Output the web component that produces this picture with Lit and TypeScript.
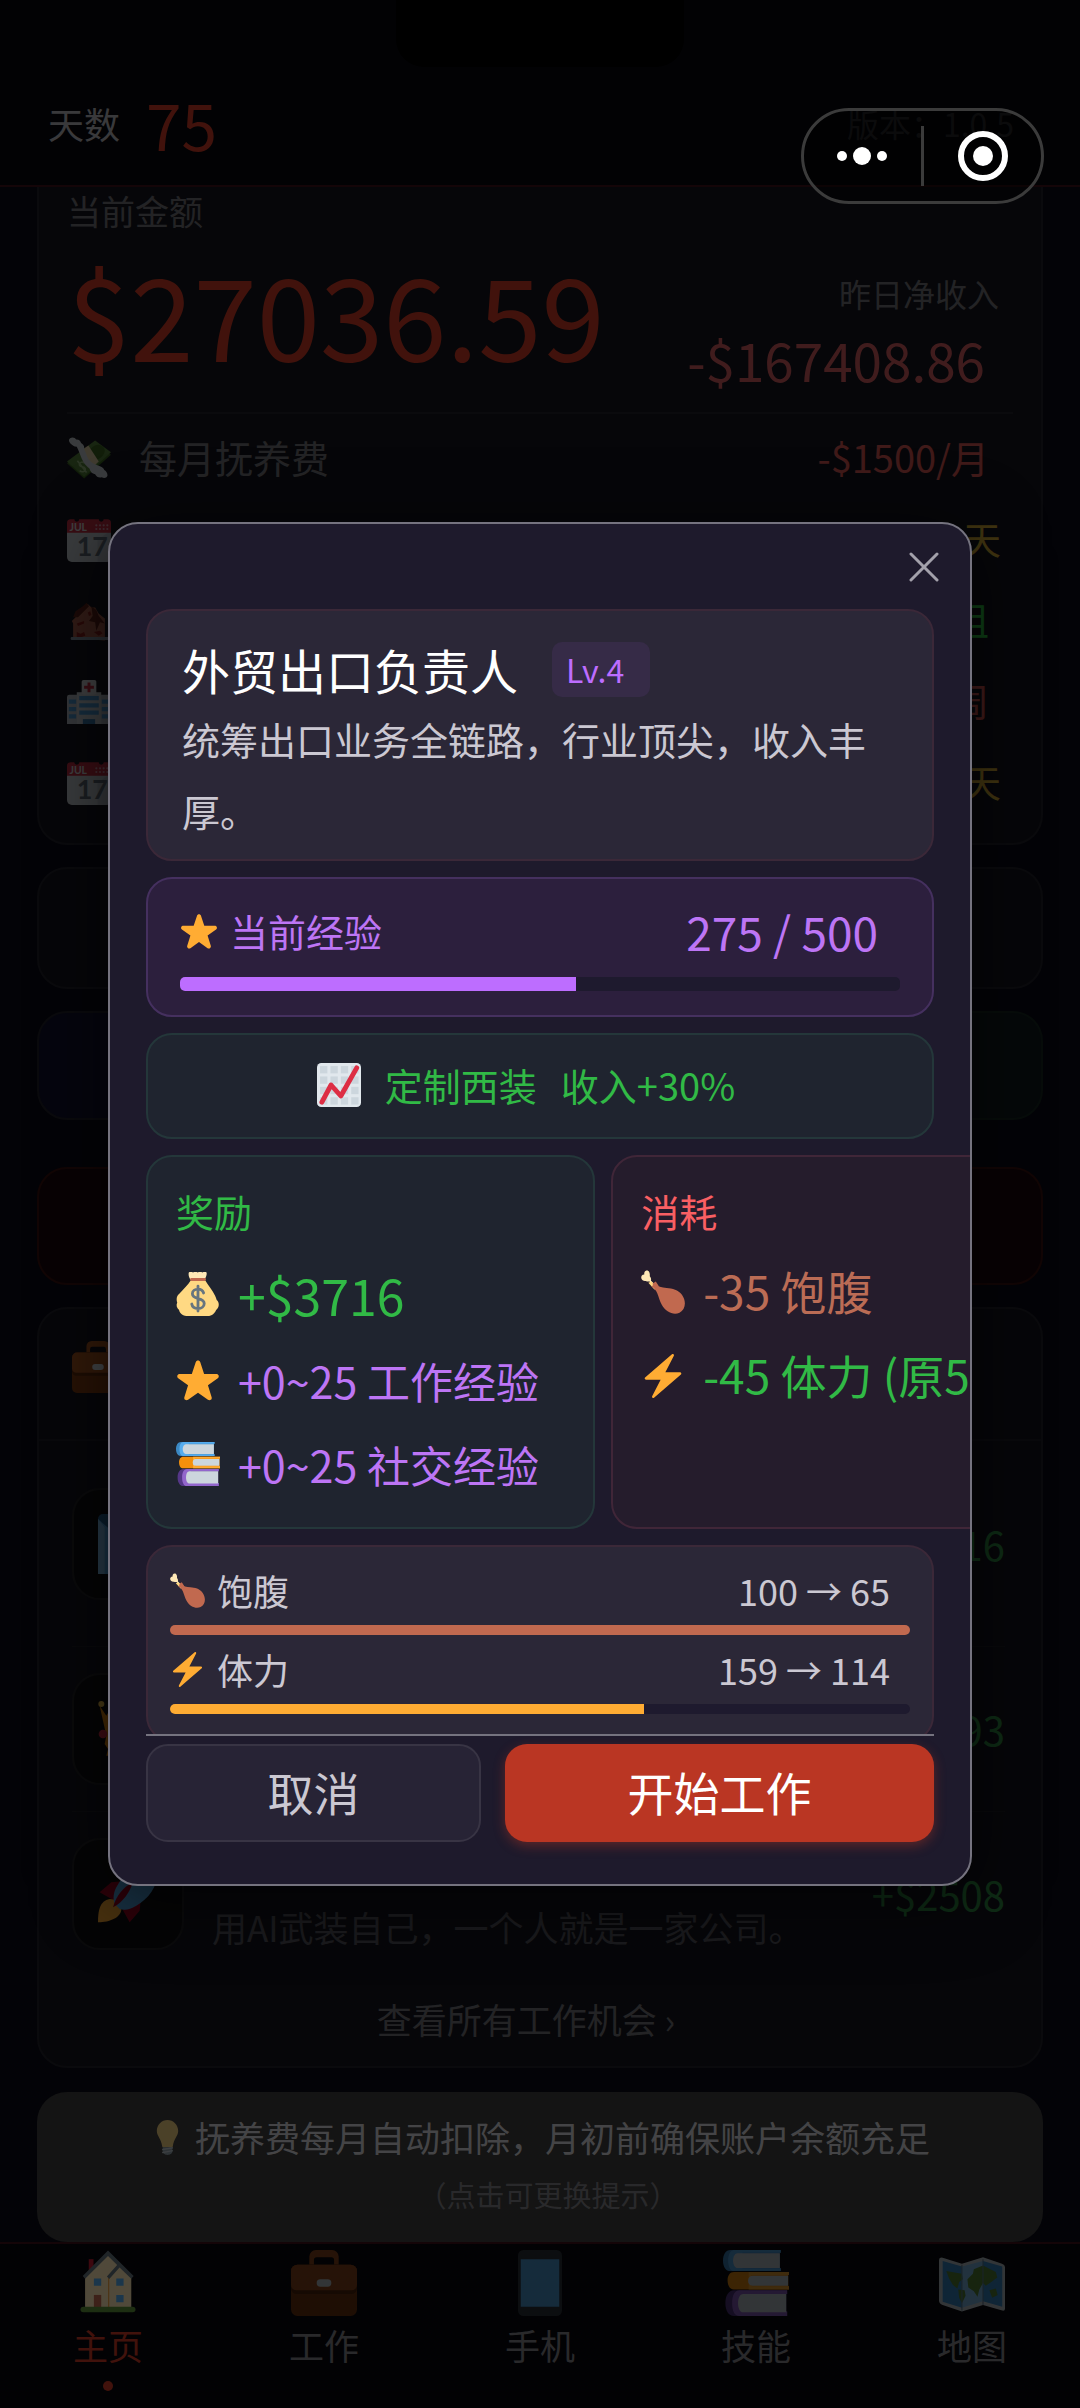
import { LitElement, html, svg, css, nothing, type SVGTemplateResult } from "lit";
import { customElement, property, state } from "lit/decorators.js";
import { classMap } from "lit/directives/class-map.js";
import { styleMap } from "lit/directives/style-map.js";

const BRIEFCASE = svg`
  <path d="M10 8V3.600A3.600 3.600 0 0 1 13.600 0h8.800A3.600 3.600 0 0 1 26 3.600V8h-2.500V5.500a1.500 1.500 0 0 0-1.500-1.500h-8a1.500 1.500 0 0 0-1.500 1.500V8z" fill="#9A4E1C"/>
  <rect x="0" y="8" width="36" height="28" rx="3.500" fill="#7B3A10"/>
  <path d="M0 11.500A3.500 3.500 0 0 1 3.500 8h29a3.500 3.500 0 0 1 3.500 3.500V21a3 3 0 0 1-3 3H3a3 3 0 0 1-3-3z" fill="#5A270A"/>
  <path d="M0 11.500A3.500 3.500 0 0 1 3.500 8h29a3.500 3.500 0 0 1 3.500 3.500V19a3 3 0 0 1-3 3H3a3 3 0 0 1-3-3z" fill="#9A4E1C"/>
  <rect x="14" y="16" width="8" height="4" rx="2" fill="#CCD6DD"/>`;

const CALENDAR = svg`
  <path d="M0 10h36v22a4 4 0 0 1-4 4H4a4 4 0 0 1-4-4z" fill="#E1E8ED"/>
  <path d="M36 10v22a4 4 0 0 1-4 4h-7V18z" fill="#CCD6DD"/>
  <path d="M0 12V4a3 3 0 0 1 3-3h3a2 2 0 0 0 4 0h16a2 2 0 0 0 4 0h3a3 3 0 0 1 3 3v8z" fill="#DD2E44"/>
  <text x="2" y="10.500" font-size="8.500" font-weight="700" fill="#F5F8FA" font-family="Lato, sans-serif">JUL</text>
  <g fill="#F4ABBA">
    <circle cx="24" cy="6" r=".9"/><circle cx="27" cy="6" r=".9"/><circle cx="30" cy="6" r=".9"/><circle cx="33" cy="6" r=".9"/>
    <circle cx="24" cy="9" r=".9"/><circle cx="27" cy="9" r=".9"/><circle cx="30" cy="9" r=".9"/><circle cx="33" cy="9" r=".9"/>
  </g>
  <text x="8" y="31" font-size="22" font-weight="700" fill="#66757F" font-family="Lato, sans-serif">17</text>`;

const DRUMSTICK = svg`
  <path d="M13 13.500 8.200 8.700c.2-1.300-.1-2.600-1-3.500C7.500 3.300 6.900 .5 4.900 .5 3.100 .5 2.400 2.200 2.700 3.700 .9 3.700 0 5.200.2 6.500.5 8.500 2.600 9.300 4 8.900c.9.500 1.900.6 2.700.3l5.200 5.600z" fill="#FFE8B6"/>
  <path d="M8.500 9.500 14 15l-3 1-5-5.500z" fill="#FFD983"/>
  <path d="M11.500 11c2.200 2.600 5.300 3.400 9.500 3.700 4.700.4 9.500 1.300 12.500 5.600 3.900 5.600 2.900 12.200-2 14.700-4.900 2.400-11.300-.7-14.500-6.500-1.700-3.200-2.300-6-3.700-9.500-.9-2.200-2.500-4.200-4.800-5.500z" fill="#C1694F"/>
  <path d="m9.300 11.300 2.800-1.900 2.400 3.600-3 2z" fill="#C1694F"/>`;

const ICONS: Record<string, SVGTemplateResult> = {
  star: svg`<path fill="#FFAC33" d="M27.287 34.627c-.404 0-.806-.124-1.152-.371L18 28.422l-8.135 5.834c-.343.247-.745.371-1.147.371-.405 0-.81-.126-1.153-.379-.689-.5-.979-1.390-.723-2.199l3.034-9.792-8.062-5.681c-.685-.505-.97-1.393-.708-2.203.264-.809 1.016-1.357 1.866-1.363L12.947 13l3.179-9.549c.268-.809 1.023-1.353 1.874-1.353.851 0 1.606.545 1.875 1.353L23 13l10.036.011c.853.006 1.606.554 1.866 1.363.26.81-.022 1.698-.708 2.203l-8.062 5.681 3.034 9.792c.26.809-.034 1.699-.719 2.199-.346.254-.753.378-1.160.378z"/>`,
  bolt: svg`<path fill="#FFAC33" d="M32.938 15.651C32.792 15.260 32.418 15 32 15H19.925L26.890 1.458c.219-.426.106-.947-.271-1.243C26.437.071 26.218 0 26 0c-.233 0-.466.082-.653.243L18 6.588 3.347 19.243c-.316.273-.43.714-.284 1.105S3.582 21 4 21h12.075L9.110 34.542c-.219.426-.106.947.271 1.243.182.144.401.215.619.215.233 0 .466-.082.653-.243L18 29.412l14.653-12.655c.317-.273.43-.714.285-1.106z"/>`,
  drumstick: DRUMSTICK,
  calendar: CALENDAR,
  briefcase: BRIEFCASE,
  chart: svg`
    <rect width="36" height="36" rx="3.500" fill="#E1E8ED"/>
    <g fill="#CCD6DD">
      ${[2.5, 11, 19.5, 28].map((y) => [2.5, 11, 19.5, 28].map((x) => svg`<rect x=${x} y=${y} width="6" height="6"/>`))}
    </g>
    <path d="M4 32 11.500 18l8 9L32.500 4" fill="none" stroke="#DD2E44" stroke-width="4" stroke-linecap="round" stroke-linejoin="round"/>`,
  moneybag: svg`
    <path d="M12 6.500C10.500 4.500 10 2 10.500 .5c1-1.300 2.600-.5 3.500 0 1-1 2.600-1 3.800 0 1.200-1 2.700-1 3.700 0 1-.6 2.600-1.200 3.500 0 .4 1.500-.3 3.500-1.800 6z" fill="#FFE8B6"/>
    <path d="M12 7h12c2 3.500 6 8 8 12.500.5 1 .9 2.300 1.300 3.500 2.500 2 2.200 6.500-.5 8C31.800 33.500 29.500 36 26 36H10c-4 0-7-2-7.500-5-2-1.500-2.500-4-1.500-6-.8-2.500-.6-5.500 1.500-7C6 14 10 10.500 12 7z" fill="#FFD983"/>
    <rect x="11.500" y="5" width="13" height="2.400" rx="1.200" fill="#C1694F"/>
    <path d="M22.600 17.200c-.6-2-2.400-3.200-4.600-3.200-2.500 0-4.600 1.400-4.600 3.800 0 5.300 9.700 2.500 9.700 8 0 2.600-2.300 4.100-5 4.100s-4.800-1.300-5.200-3.700M18 11.500V32" fill="none" stroke="#67757F" stroke-width="2.300" stroke-linecap="round"/>`,
  books: svg`
    <path d="M4 0h27.500v1.500H31v8.500h.5V11.500H4C1.500 11.500 0 9 0 5.800S1.500 0 4 0z" fill="#3B88C3"/>
    <path d="M6 0h25.500v1.500h-21v8.500h21v1.500H6C4 11.500 2.800 9 2.800 5.800S4 0 6 0z" fill="#55ACEE"/>
    <path d="M8 1.800h23v8H8C6.500 9.800 5.500 8 5.500 5.800S6.500 1.800 8 1.800z" fill="#CCD6DD"/>
    <path d="M6 12h30v1.600h-.4v6.200h.4v1.700H6c-2.300 0-3.500-2-3.500-4.800S3.700 12 6 12z" fill="#F4900C"/>
    <path d="M14 12h22v1.600H15.500v6.200H36v1.700H14z" fill="#FFAC33"/>
    <path d="M16 14h19.500v5.500H16c-1.500 0-2.300-1.100-2.300-2.700S14.500 14 16 14z" fill="#CCD6DD"/>
    <path d="M6 22h29v2h-.5v9.500h.5V36H6c-3 0-4.700-3-4.700-7S3 22 6 22z" fill="#553788"/>
    <path d="M9 22h26v2H12v9.500h23V36H9c-2.800 0-4-3-4-7s1.200-7 4-7z" fill="#9266CC"/>
    <path d="M11 24h23.500v10H11c-1.800 0-2.800-2.300-2.800-5s1-5 2.800-5z" fill="#CCD6DD"/>`,
  house: svg`
    <path d="M7.500 5h2.600v8H7.500z" fill="#BE1931"/>
    <path d="M5.500 15 18 2l12.700 13v17H5.500z" fill="#FFE8B6"/>
    <path d="M18 15h.7v17H18z" fill="#F2A74B"/>
    <path d="M18 .3 32 14.200l-1.300 1.500L24.300 9.500l-5.600 6.300-1.300-1.400L23 8.200l-5-4.900L5.500 15.700l-1.300-1.500z" fill="#66757F"/>
    <path d="M10.300 15.500h4v4h-4zM22.500 15.500h4v4h-4zM22.500 24.500h4v4h-4z" fill="#55ACEE"/>
    <path d="M10.300 24.500h4V32h-4z" fill="#C1694F"/>
    <rect x="3" y="31" width="30" height="3" rx="1.500" fill="#5C913B"/>`,
  phone: svg`
    <rect x="6" y="0" width="24" height="36" rx="3" fill="#31373D"/>
    <path d="M7.500 5h21v26h-21z" fill="#55ACEE"/>`,
  map: svg`
    <path d="M2 4.200 12.500 7.500 24 4l10 3.300q2 .6 2 2.200v22.500q0 1.600-2 .9L24 30l-11.500 3.500L2 30q-2-.7-2-2.300V5.500q0-1.900 2-1.300z" fill="#CCD6DD"/>
    <path d="M2 6 12.500 9v22.500L2 28.200z" fill="#3B94D9"/>
    <path d="M12.500 9 24 6v22l-11.500 3.500z" fill="#88C9F9"/>
    <path d="M24 6l10.500 3v22L24 28z" fill="#3B94D9"/>
    <path d="M4 11.500l3 .5 5.500 1 .5 3-2 1.500-1 3.500-2.500-2-2-3.500zM10.500 21.500l3.500.5.500 3-2 4-1.500-3zM15.500 16l3-3 .5-2.500 5-2 7 3.500.8 3-3.300 2.500-3 2-1.500-1.500-2 3.500-1 4-2-3-3-2zM27.500 22l3.500-1 1 3.500-3 1.500z" fill="#5C913B"/>
    <path d="M12.500 8v25" stroke="#66899E" stroke-width=".6"/><path d="M24 5v25" stroke="#66899E" stroke-width=".6"/>`,
  bulb: svg`
    <path d="M29 11.200c0 5.300-4.700 7.800-5.500 15.800-.1.700-.6 1-1.200 1h-8.600c-.6 0-1.100-.3-1.200-1C11.700 19 7 16.500 7 11.200 7 5 12 0 18 0s11 5 11 11.200z" fill="#FFD983"/>
    <path d="M13 28h10v4.500c0 2-2.500 3.500-5 3.500s-5-1.500-5-3.500z" fill="#99AAB5"/>
    <path d="M12.500 30.500 23.500 28.500M12.500 33.500l11-2" stroke="#CCD6DD" stroke-width="1.400"/>`,
  cash: svg`
    <path d="M0 21.500 23 4l13 10.500L14 34z" fill="#3E721D"/>
    <path d="M0 20 23 2.800 36 12.500 14 32.500z" fill="#5C913B"/>
    <path d="M19.500 9.500c3-3.700 7.500-4.200 10-1.500s1.500 6-1.500 8.500-6 3-8 .5-2-5-.5-7.500z" fill="#3E721D"/>
    <path d="M11 11.500 17.500 7 26 20l-6.500 6z" fill="#FFE8B6"/>
    <path d="M14.500 21.500c-2-2-4.700-.5-4.300 1.500.5 2.400 4 .5 4.700 3 .5 2-2.500 3.500-4.400 1.500M8.500 19.500l7.500 9.500" fill="none" stroke="#A7D28B" stroke-width="1.300"/>
    <path d="M2.500 1c2-1.300 4.200-.4 5 1 2-.2 3.800 1 4 3C13.500 6 14.500 8 14 10c1.500 2.500 2 5 3.500 8 1.500 2.500 4.500 4 7 5 2 1 5 1.500 6 4 1.500.5 3 3 2.500 5-.5 1.700-3 2-4.500 1-2.500.7-4.500-.5-5.500-2.500-2.500-.5-4-2-4.500-4.500-3-2.500-5-5-6.500-8.500-1.500-3.500-2.500-6.500-4-9.500C5.500 8 4.500 6.500 3 5.500 1.500 4 1 2.200 2.500 1z" fill="#E1E8ED"/>`,
  ruin: svg`
    <path d="M5 32V20l-1-2 3-3 1-3 4-3 2-3 3-2 3 3 3 0 3 5 5 4v18z" fill="#C1694F"/>
    <path d="M5 15l2-5 6-4 3-3 2 3-9 9zM20 6l4 3 2 5 5 6-4-1-3 7-1-7-5-1 3-4z" fill="#662113"/>
    <path d="M8 20l6-2v2l-5 2zM8 27l3 1.500 3-1.500 1 3-3 1-4 0zM22 27l5-1 2 2-3 2zM17 11l2-1 1 3-2 1z" fill="#9B2016"/>
    <rect x="3" y="31" width="32" height="2.500" rx="1" fill="#99AAB5"/>`,
  hospital: svg`
    <path d="M0 14a2 2 0 0 1 2-2h32a2 2 0 0 1 2 2v22H0z" fill="#CCD6DD"/>
    <path d="M8 10h20v26H8z" fill="#E1E8ED"/>
    <rect x="12" y="0" width="12" height="12" rx="1.500" fill="#F5F8FA"/>
    <path d="M16.800 2h2.400v2.800H22v2.400h-2.800V10h-2.400V7.200H14V4.800h2.800z" fill="#DD2E44"/>
    <path d="M10 13h16v3.500H10zM10 19h16v3.500H10zM10 25h16v3.500H10zM1.500 16h6v3.500h-6zM1.500 22h6v3.500h-6zM1.500 28h6v3.500h-6zM28.500 16h6v3.500h-6zM28.500 22h6v3.500h-6zM28.500 28h6v3.500h-6z" fill="#55ACEE"/>
    <path d="M13 32h10v4H13z" fill="#3B88C3"/>`,
  device: svg`
    <rect x="0" y="0" width="30" height="36" rx="3" fill="#226699"/>
    <path d="M0 3v33h24V24z" fill="#55ACEE"/>
    <path d="M0 3v33h4V8z" fill="#88C9F9"/>`,
  castle: svg`
    <circle cx="2" cy="3" r="1.800" fill="#FFCC4D"/><circle cx="12" cy="2" r="1.800" fill="#FFCC4D"/>
    <path d="M1 4l4 6 3-5 2 4 3-6 5 6 5-6 3 6 4-6v31H5l1-4-2-3 1-5-2-9z" fill="#F4900C"/>
    <path d="M8 12v22h2V12zM14 12v22h2V12z" fill="#FFCC4D"/>
    <circle cx="3" cy="21" r="2.600" fill="#DD2E44"/>`,
  rocket: svg`
    <path d="M1 17l7-6 10-1-8 12zM19 35l6-7 1-10-12 8z" fill="#A0041E"/>
    <path d="M0 35c0-7 1-13 7-14 4 0 7 3 7 6 0 5-7 8-14 8z" fill="#FFAC33"/>
    <path d="M36 0C25-1 16 4 11 14c-2 4-2 7-1 10l3 3c4 1 6 0 10-2C32 20 37 11 36 0z" fill="#55ACEE"/>
    <path d="M9 26c2-7 6-12 12-15-2 6-6 12-12 15z" fill="#A0041E"/>`,
};

@customElement("emoji-icon")
export class EmojiIcon extends LitElement {
  @property() name = "star";

  static styles = css`
    :host {
      display: block;
      flex: none;
      width: 44px;
      height: 44px;
    }
    svg {
      display: block;
      width: 100%;
      height: 100%;
    }
  `;

  render() {
    return html`<svg viewBox="0 0 36 36" aria-hidden="true">${ICONS[this.name] ?? nothing}</svg>`;
  }
}

@customElement("meter-bar")
export class MeterBar extends LitElement {
  @property({ type: Number }) percent = 0;
  @property() color = "#bd6dff";

  static styles = css`
    :host {
      display: block;
      height: 10px;
    }
    .track {
      height: 100%;
      border-radius: 5px;
      overflow: hidden;
      background: #1e1a2e;
    }
    .fill {
      height: 100%;
    }
  `;

  render() {
    return html`<div class="track">
      <div class="fill" style=${styleMap({ width: `${this.percent}%`, background: this.color })}></div>
    </div>`;
  }
}

interface Bill {
  icon: string;
  label: string;
  value: string;
  tone: string;
}

const BILLS: Bill[] = [
  { icon: "cash", label: "每月抚养费", value: "-$1500/月", tone: "loss" },
  { icon: "calendar", label: "", value: "天", tone: "days" },
  { icon: "ruin", label: "", value: "租", tone: "gain" },
  { icon: "hospital", label: "", value: "周", tone: "loss" },
  { icon: "calendar", label: "", value: "天", tone: "days" },
];

const JOBS = [
  { icon: "device", note: "", pay: "16" },
  { icon: "castle", note: "", pay: "93" },
  { icon: "rocket", note: "用AI武装自己，一个人就是一家公司。", pay: "+$2508" },
];

const TABS = [
  { icon: "house", label: "主页" },
  { icon: "briefcase", label: "工作" },
  { icon: "phone", label: "手机" },
  { icon: "books", label: "技能" },
  { icon: "map", label: "地图" },
];

@customElement("app-root")
export class AppRoot extends LitElement {
  @state() private tab = 0;

  static styles = css`
    :host {
      display: block;
      position: relative;
      color: #fff;
      background: #0a0a14;
      font-family: "Noto Sans CJK SC", sans-serif;
      font-size: 38px;
      line-height: 48px;
    }
    * {
      box-sizing: border-box;
    }
    button {
      margin: 0;
      padding: 0;
      border: 0;
      background: none;
      color: inherit;
      font: inherit;
      cursor: pointer;
    }
    a {
      color: inherit;
      text-decoration: none;
    }
    h2, h3, p, ul {
      margin: 0;
      padding: 0;
      font-weight: 400;
      list-style: none;
    }

    /* page */
    .page {
      display: flex;
      flex-direction: column;
      min-height: 100vh;
    }
    .topbar {
      display: flex;
      align-items: center;
      height: 187px;
      padding: 60px 66px 0 48px;
      border-bottom: 2px solid #3a1018;
      background: #07070d;
    }
    .day-label {
      font-size: 36px;
      color: #a4a4aa;
    }
    .day-count {
      margin-left: 26px;
      font-size: 64px;
      color: #ba3623;
    }
    .version {
      margin-left: auto;
      font-size: 32px;
      color: #38383c;
    }
    .main {
      flex: 1;
      display: flex;
      flex-direction: column;
      gap: 22px;
      padding: 0 37px;
    }
    .card {
      border: 2px solid #1e1e26;
      border-radius: 30px;
      background: #13131a;
    }
    .money {
      padding: 0 28px 20px;
      border-top: 0;
      border-radius: 0 0 30px 30px;
    }
    .money-label {
      font-size: 34px;
      color: #66666c;
    }
    .money-row {
      display: flex;
      justify-content: space-between;
      height: 179px;
      border-bottom: 2px solid #1e1e26;
    }
    .balance {
      font-size: 114px;
      line-height: 156px;
      color: #ba3623;
    }
    .yesterday {
      padding: 34px 14px 0 0;
      text-align: right;
    }
    .yesterday-label {
      font-size: 32px;
      color: #66666c;
    }
    .yesterday-value {
      padding: 12px 14px 0 0;
      font-size: 53px;
      line-height: 60px;
      color: #b85055;
    }
    .bills {
      padding-top: 4px;
    }
    .bill {
      display: flex;
      align-items: center;
      gap: 28px;
      height: 81px;
      padding-right: 12px;
    }
    .bill emoji-icon {
      opacity: 0.7;
    }
    .bill-label {
      flex: 1;
      padding-bottom: 4px;
      color: #66666c;
    }
    .bill-value {
      padding: 0 12px 4px 0;
    }
    .loss { color: #b84a48; }
    .gain { color: #28b03e; }
    .days { padding-right: 0; color: #b8942e; }

    .strip {
      height: 122px;
    }
    .pair {
      display: grid;
      grid-template-columns: 1fr 1fr;
      gap: 22px;
      height: 109px;
    }
    .blue { background: #111128; }
    .green { background: #0f181c; border-color: #15241f; }
    .alert {
      height: 118px;
      margin-top: 25px;
      border-color: #34110f;
      background: #19080c;
    }
    .jobs-head {
      padding: 32px 33px 46px;
      border-bottom: 2px solid #1c1c24;
    }
    .jobs-head emoji-icon {
      width: 52px;
      height: 52px;
      opacity: 0.9;
    }
    .job-list {
      padding: 21px 36px 0 33px;
    }
    .job {
      display: flex;
      align-items: center;
      gap: 28px;
      padding: 26px 0;
      border-bottom: 1px solid #1a1a22;
    }
    .job:first-child {
      padding-bottom: 46px;
    }
    .job:last-child {
      border-bottom: 0;
    }
    .job-icon {
      display: grid;
      place-items: center;
      width: 112px;
      height: 112px;
      border: 2px solid #1e1e22;
      border-radius: 28px;
      background: #0e0e10;
    }
    .job-icon emoji-icon {
      width: 60px;
      height: 60px;
      opacity: 0.8;
    }
    .job-note {
      flex: 1;
      align-self: flex-end;
      font-size: 35px;
      line-height: 46px;
      color: #4c4c54;
    }
    .job-pay {
      font-size: 40px;
      color: #2a7c3c;
    }
    .all-jobs {
      display: block;
      padding: 0 28px 4px 0;
      font-size: 35px;
      line-height: 86px;
      text-align: center;
      color: #66666c;
    }
    .tip {
      display: block;
      width: 100%;
      margin-top: 2px;
      padding: 17px 0 25px;
      border-radius: 30px;
      background: #393939;
      text-align: center;
    }
    .tip-main {
      display: flex;
      align-items: center;
      justify-content: center;
      gap: 10px;
      font-size: 35px;
      line-height: 56px;
      color: #c4c4c8;
    }
    .tip-main emoji-icon {
      width: 35px;
      height: 35px;
      opacity: 0.8;
    }
    .tip-more {
      display: block;
      padding: 6px 0 0 16px;
      font-size: 29px;
      line-height: 46px;
      color: #77777c;
    }
    .tabs {
      display: grid;
      grid-template-columns: repeat(5, 1fr);
      border-top: 2px solid #3a1018;
      background: #07070c;
    }
    .tab {
      display: flex;
      flex-direction: column;
      align-items: center;
      padding: 6px 0 17px;
      font-size: 35px;
      color: #77777c;
    }
    .tab emoji-icon {
      width: 66px;
      height: 66px;
      opacity: 0.7;
    }
    .tab-label {
      padding-top: 5px;
    }
    .tab-dot {
      width: 10px;
      height: 10px;
      margin-top: 12px;
      border-radius: 50%;
    }
    .active { color: #ba3623; }
    .active emoji-icon { opacity: 0.9; }
    .active .tab-dot { background: #ba3623; }

    /* phone chrome */
    .notch {
      position: absolute;
      top: 0;
      left: 50%;
      width: 288px;
      height: 67px;
      margin-left: -144px;
      border-radius: 0 0 28px 28px;
      background: #000;
    }
    .capsule {
      position: absolute;
      top: 108px;
      right: 36px;
      display: flex;
      align-items: center;
      width: 243px;
      height: 96px;
      border: 3px solid #3b3b3b;
      border-radius: 48px;
      background: rgba(0, 0, 0, 0.4);
    }
    .capsule button {
      flex: 1;
      display: grid;
      place-items: center;
      height: 100%;
    }
    .capsule-rule {
      width: 3px;
      height: 60px;
      background: #3b3b3b;
    }

    /* dialog */
    .backdrop {
      position: absolute;
      inset: 0;
      display: grid;
      place-items: center;
      background: rgba(0, 0, 0, 0.65);
    }
    .dialog {
      display: flex;
      flex-direction: column;
      width: 80%;
      max-height: 1364px;
      border: 2px solid #75737f;
      border-radius: 30px;
      overflow: hidden;
      background: #1e1a2c;
      box-shadow: 0 12px 72px rgba(0, 0, 0, 0.6);
    }
    .dialog-head {
      flex: none;
      display: flex;
      justify-content: flex-end;
      padding-right: 4px;
    }
    .close {
      display: grid;
      place-items: center;
      width: 84px;
      height: 85px;
    }
    .dialog-body {
      flex: 1;
      min-height: 0;
      display: flex;
      flex-direction: column;
      gap: 16px;
      padding: 0 36px;
      overflow: hidden;
    }
    .panel {
      flex: none;
      border: 2px solid #3b2838;
      border-radius: 26px;
      background: #2b2737;
    }
    .intro {
      padding: 24px 34px 12px;
    }
    .intro-title {
      display: flex;
      align-items: center;
      gap: 34px;
    }
    .intro-title h2 {
      font-size: 48px;
      line-height: 68px;
    }
    .level {
      padding: 0 26px 0 14px;
      border-radius: 10px;
      background: #362b47;
      font-size: 32px;
      line-height: 55px;
      color: #bd6dff;
    }
    .intro p {
      line-height: 72px;
      color: #cbc8d2;
    }
    .exp {
      padding: 18px 32px 24px;
      border-color: #45305f;
      background: #2c1f3d;
      color: #bd75f5;
    }
    .exp-row, .stat-row {
      display: flex;
      align-items: center;
      gap: 12px;
    }
    .exp-row {
      line-height: 68px;
      padding-bottom: 12px;
    }
    .exp-row emoji-icon {
      width: 38px;
      height: 38px;
    }
    .exp-value {
      margin-left: auto;
      padding-right: 22px;
      font-size: 46px;
    }
    .exp meter-bar {
      height: 14px;
    }
    .suit {
      display: flex;
      align-items: center;
      justify-content: center;
      gap: 24px;
      height: 106px;
      padding: 0 28px 2px 0;
      border-color: #24373a;
      background: #1f242f;
      line-height: 54px;
      color: #31ba46;
    }
    .trade {
      flex: none;
      display: flex;
      gap: 16px;
    }
    .trade-card {
      flex: none;
      width: 57%;
      padding: 26px 28px 21px;
      white-space: nowrap;
    }
    .reward {
      border-color: #24373a;
      background: #1f242f;
    }
    .cost {
      width: 64%;
      border-color: #402638;
      background: #251c2c;
    }
    .trade-card h3 {
      padding-bottom: 11px;
      font-size: 38px;
      line-height: 56px;
    }
    .trade-row {
      display: flex;
      align-items: center;
      gap: 18px;
      height: 84px;
      font-size: 43px;
    }
    .cost .trade-row {
      font-size: 46px;
    }
    .cost .trade-row span {
      padding-bottom: 4px;
    }
    .reward .cash {
      height: 88px;
      font-size: 50px;
    }
    .c-green { color: #31ba46; }
    .c-red { color: #f95f63; }
    .c-purple { color: #bd75f5; }
    .c-brown { color: #bb6c55; }
    .stats {
      display: flex;
      flex-direction: column;
      gap: 11px;
      padding: 20px 22px 26px;
      color: #cbc8d2;
    }
    .stat-row {
      padding-bottom: 12px;
      font-size: 36px;
      line-height: 46px;
    }
    .stat-row emoji-icon {
      width: 35px;
      height: 35px;
    }
    .stat-value {
      margin-left: auto;
      padding-right: 20px;
    }
    .dialog-foot {
      flex: none;
      display: grid;
      grid-template-columns: 335fr 429fr;
      gap: 24px;
      margin: 0 36px;
      padding: 8px 0 42px;
      border-top: 2px solid #75737f;
    }
    .action {
      height: 98px;
      padding-bottom: 4px;
      border-radius: 22px;
      font-size: 46px;
    }
    .cancel {
      border: 2px solid #383444;
      background: #272335;
      color: #cbc8d2;
    }
    .start {
      background: #ba3623;
      color: #fff;
      box-shadow: 0 4px 12px rgba(186, 54, 35, 0.4);
    }
  `;

  private renderPage() {
    return html`
      <div class="page">
        <header class="topbar">
          <span class="day-label">天数</span>
          <span class="day-count">75</span>
          <span class="version">版本：1.0.5</span>
        </header>
        <main class="main">
          <section class="card money">
            <p class="money-label">当前金额</p>
            <div class="money-row">
              <div class="balance">$27036.59</div>
              <div class="yesterday">
                <div class="yesterday-label">昨日净收入</div>
                <div class="yesterday-value">-$167408.86</div>
              </div>
            </div>
            <ul class="bills">
              ${BILLS.map(
                (b) => html`<li class="bill">
                  <emoji-icon name=${b.icon}></emoji-icon>
                  <span class="bill-label">${b.label}</span>
                  <span class="bill-value ${b.tone}">${b.value}</span>
                </li>`
              )}
            </ul>
          </section>
          <div class="card strip"></div>
          <div class="pair">
            <div class="card blue"></div>
            <div class="card green"></div>
          </div>
          <div class="card alert"></div>
          <section class="card">
            <div class="jobs-head"><emoji-icon name="briefcase"></emoji-icon></div>
            <ul class="job-list">
              ${JOBS.map(
                (j) => html`<li class="job">
                  <span class="job-icon"><emoji-icon name=${j.icon}></emoji-icon></span>
                  <span class="job-note">${j.note}</span>
                  <span class="job-pay">${j.pay}</span>
                </li>`
              )}
            </ul>
            <a class="all-jobs" href="#jobs">查看所有工作机会 ›</a>
          </section>
          <button class="tip">
            <span class="tip-main"><emoji-icon name="bulb"></emoji-icon>抚养费每月自动扣除，月初前确保账户余额充足</span>
            <span class="tip-more">（点击可更换提示）</span>
          </button>
        </main>
        <nav class="tabs">
          ${TABS.map(
            (t, i) => html`<button
              class=${classMap({ tab: true, active: i === this.tab })}
              @click=${() => (this.tab = i)}
            >
              <emoji-icon name=${t.icon}></emoji-icon>
              <span class="tab-label">${t.label}</span>
              <span class="tab-dot"></span>
            </button>`
          )}
        </nav>
      </div>
    `;
  }

  private renderDialog() {
    return html`
      <div class="backdrop">
        <section class="dialog" role="dialog" aria-labelledby="job-title">
          <div class="dialog-head">
            <button class="close" aria-label="关闭">
              <svg width="30" height="30" viewBox="0 0 30 30" aria-hidden="true">
                <path d="M2 2l26 26M28 2 2 28" stroke="#a3a1ab" stroke-width="3" stroke-linecap="round" />
              </svg>
            </button>
          </div>
          <div class="dialog-body">
            <div class="panel intro">
              <div class="intro-title">
                <h2 id="job-title">外贸出口负责人</h2>
                <span class="level">Lv.4</span>
              </div>
              <p>统筹出口业务全链路，行业顶尖，收入丰厚。</p>
            </div>
            <div class="panel exp">
              <div class="exp-row">
                <emoji-icon name="star"></emoji-icon>
                <span>当前经验</span>
                <span class="exp-value">275 / 500</span>
              </div>
              <meter-bar percent="55" color="#bd6dff"></meter-bar>
            </div>
            <div class="panel suit">
              <emoji-icon name="chart"></emoji-icon>
              <span>定制西装</span>
              <span>收入+30%</span>
            </div>
            <div class="trade">
              <div class="panel trade-card reward">
                <h3 class="c-green">奖励</h3>
                <div class="trade-row cash c-green"><emoji-icon name="moneybag"></emoji-icon><span>+$3716</span></div>
                <div class="trade-row c-purple"><emoji-icon name="star"></emoji-icon><span>+0~25 工作经验</span></div>
                <div class="trade-row c-purple"><emoji-icon name="books"></emoji-icon><span>+0~25 社交经验</span></div>
              </div>
              <div class="panel trade-card cost">
                <h3 class="c-red">消耗</h3>
                <div class="trade-row c-brown"><emoji-icon name="drumstick"></emoji-icon><span>-35 饱腹</span></div>
                <div class="trade-row c-green"><emoji-icon name="bolt"></emoji-icon><span>-45 体力 (原50)</span></div>
              </div>
            </div>
            <div class="panel stats">
              <div>
                <div class="stat-row">
                  <emoji-icon name="drumstick"></emoji-icon><span>饱腹</span>
                  <span class="stat-value">100 → 65</span>
                </div>
                <meter-bar percent="100" color="#c1694f"></meter-bar>
              </div>
              <div>
                <div class="stat-row">
                  <emoji-icon name="bolt"></emoji-icon><span>体力</span>
                  <span class="stat-value">159 → 114</span>
                </div>
                <meter-bar percent="64" color="#ffac33"></meter-bar>
              </div>
            </div>
          </div>
          <div class="dialog-foot">
            <button class="action cancel">取消</button>
            <button class="action start">开始工作</button>
          </div>
        </section>
      </div>
    `;
  }

  render() {
    return html`
      ${this.renderPage()}
      <div class="notch"></div>
      ${this.renderDialog()}
      <div class="capsule">
        <button aria-label="更多">
          <svg width="52" height="20" viewBox="0 0 52 20" fill="#fff" aria-hidden="true">
            <circle cx="5" cy="10" r="5" /><circle cx="25" cy="10" r="9" /><circle cx="45" cy="10" r="5" />
          </svg>
        </button>
        <span class="capsule-rule"></span>
        <button aria-label="退出">
          <svg width="50" height="50" viewBox="0 0 50 50" aria-hidden="true">
            <circle cx="25" cy="25" r="22" fill="none" stroke="#fff" stroke-width="6" />
            <circle cx="25" cy="25" r="10" fill="#fff" />
          </svg>
        </button>
      </div>
    `;
  }
}
